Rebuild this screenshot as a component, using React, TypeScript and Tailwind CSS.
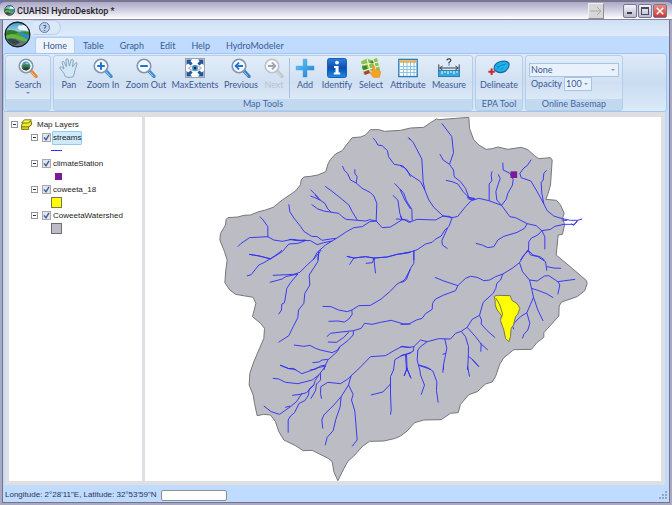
import type { ReactNode } from "react";

function Globe({ className }: { className: string }) {
  return (
    <svg viewBox="0 0 28 28" className={className} aria-hidden="true">
      <defs>
        <clipPath id="globe-disc">
          <circle cx="14" cy="14" r="12" />
        </clipPath>
        <linearGradient id="globe-sky" x1="0" y1="0" x2="0" y2="1">
          <stop offset="0" stopColor="#3c93c4" />
          <stop offset="1" stopColor="#a9dcf0" />
        </linearGradient>
      </defs>
      <circle cx="14" cy="14" r="13" fill="#22282c" stroke="#11161a" />
      <g clipPath="url(#globe-disc)">
        <rect width="28" height="13" fill="url(#globe-sky)" />
        <path d="M14 7 Q15 3 18 5 Q22 2 26 7 L26 10 L16 9Z" fill="#eef6fa" />
        <path d="M0 12 Q8 7 14 11 L28 12 L28 17 L0 18Z" fill="#4f9d3a" />
        <path d="M2 10 Q8 8 15 12 L8 15 L0 14Z" fill="#2f7a2c" />
        <path d="M0 17 Q7 11 14 15 Q21 18 28 15 L28 22 L0 22Z" fill="#63b83e" />
        <path d="M15 12 Q22 11 28 14 L28 20 Q20 19 15 12Z" fill="#2b8fc0" />
        <path d="M17 11 Q23 10 28 12 L28 15 Q22 14 17 11Z" fill="#3f8a3c" />
        <path d="M0 19 Q9 16 17 20 Q22 22 28 20 L28 28 L0 28Z" fill="#66787e" />
        <path d="M3 19 Q10 17 17 22 L12 25 Q6 24 3 19Z" fill="#33484a" />
      </g>
    </svg>
  );
}

function Magnifier({ tone, handle, children }: { tone: string; handle: string; children?: ReactNode }) {
  return (
    <svg viewBox="0 0 20 20" className="size-5" aria-hidden="true">
      <path d="M13 13 L18 18.4" stroke={handle} strokeWidth="3.4" strokeLinecap="round" />
      <path d="M12.6 13.4 L17 18.2" stroke="#ffffff" strokeOpacity=".5" strokeWidth="1" />
      <circle cx="8" cy="8" r="6.7" fill="#f2f8fe" stroke={tone} strokeWidth="1.8" />
      <circle cx="8" cy="8" r="5.3" fill="none" stroke="#ffffff" strokeWidth=".8" />
      {children}
    </svg>
  );
}

const SearchIcon = () => (
  <Magnifier tone="#8b97a6" handle="#ee8330">
    <circle cx="8" cy="8" r="4.4" fill="#3f93bd" />
    <path d="M3.6 8 Q7 5.6 12.4 8 Q12 12 8 12.4 Q4 12 3.6 8Z" fill="#3d7a32" />
    <path d="M4.2 10.4 Q8 8 11.6 10.6 Q8 14 4.2 10.4Z" fill="#303c3e" />
    <path d="M7 5.6 Q9 3.8 11 5.6Z" fill="#fff" />
  </Magnifier>
);
const ZoomInIcon = () => (
  <Magnifier tone="#8395b4" handle="#3d8fd4">
    <path d="M8 4.2V11.8M4.2 8H11.8" stroke="#1f74cf" strokeWidth="2" />
  </Magnifier>
);
const ZoomOutIcon = () => (
  <Magnifier tone="#8395b4" handle="#3d8fd4">
    <path d="M4.2 8H11.8" stroke="#1f74cf" strokeWidth="2" />
  </Magnifier>
);
const PreviousIcon = () => (
  <Magnifier tone="#8395b4" handle="#3d7fc4">
    <path d="M12 8H5M8 4.6L4.6 8L8 11.4" stroke="#1f74cf" strokeWidth="1.8" fill="none" />
  </Magnifier>
);
const NextIcon = () => (
  <Magnifier tone="#bfc2c7" handle="#c3c5c9">
    <path d="M4 8H11M8 4.6L11.4 8L8 11.4" stroke="#a2a5aa" strokeWidth="1.8" fill="none" />
  </Magnifier>
);
const PanIcon = () => (
  <svg viewBox="0 0 20 20" className="size-5" aria-hidden="true">
    <path
      d="M6.4 18.8 Q5.4 15.6 3.4 13.4 L.9 10.2 Q.6 8.6 2.2 8.9 L5 11 L3 4.4 Q3.3 2.7 4.8 3.6 L7.4 8.6 L7 1.6 Q8 0 9.2 1.5 L10.3 8 L12.2 1.7 Q13.6 .5 14.2 2.2 L13.5 9 L16.6 4.8 Q18.2 4.3 18 6 L15.9 12.5 Q15.6 16 13.8 19 Q10 20 6.4 18.8Z"
      fill="#d3e6f5"
      stroke="#7f9fbf"
      strokeWidth=".9"
      strokeLinejoin="round"
    />
  </svg>
);
const ExtentsIcon = () => (
  <svg viewBox="0 0 20 20" className="size-5" aria-hidden="true">
    <rect x=".5" y=".5" width="19" height="19" fill="#fbfdff" stroke="#9aa0a8" />
    <path d="M1.5 1.5H7L5.4 3.2L7.6 5.6L5.6 7.6L3.2 5.4L1.5 7ZM18.5 1.5H13L14.6 3.2L12.4 5.6L14.4 7.6L16.8 5.4L18.5 7ZM1.5 18.5H7L5.4 16.8L7.6 14.4L5.6 12.4L3.2 14.6L1.5 13ZM18.5 18.5H13L14.6 16.8L12.4 14.4L14.4 12.4L16.8 14.6L18.5 13Z" fill="#24549a" />
    <path d="M3.4 10.2 Q10 4.6 16.6 10.2 Q10 15.4 3.4 10.2Z" fill="#e8f3fa" stroke="#8aa4b8" strokeWidth=".8" />
    <circle cx="10" cy="10" r="2.9" fill="#3c92c8" />
    <circle cx="10" cy="10" r="1.2" fill="#123" />
  </svg>
);
const AddIcon = () => (
  <svg viewBox="0 0 20 20" className="size-5" aria-hidden="true">
    <defs>
      <linearGradient id="add-fill" x1="0" y1="0" x2="1" y2="1">
        <stop offset="0" stopColor="#6cc8f6" />
        <stop offset="1" stopColor="#1b7ed0" />
      </linearGradient>
    </defs>
    <path d="M7.8 .8H12.2V7.8H19.2V12.2H12.2V19.2H7.8V12.2H.8V7.8H7.8Z" fill="url(#add-fill)" />
  </svg>
);
const IdentifyIcon = () => (
  <svg viewBox="0 0 20 20" className="size-5" aria-hidden="true">
    <defs>
      <linearGradient id="info-fill" x1="0" y1="0" x2="0" y2="1">
        <stop offset="0" stopColor="#2f7fe0" />
        <stop offset=".5" stopColor="#0b4dae" />
        <stop offset="1" stopColor="#1f8de8" />
      </linearGradient>
    </defs>
    <rect x=".5" y=".5" width="19" height="19" rx="2" fill="url(#info-fill)" stroke="#1b5fb4" />
    <circle cx="10" cy="4.6" r="1.9" fill="#fff" />
    <path d="M7 8H11.6V14.6H13.2V16.6H6.8V14.6H8.5V10H7Z" fill="#fff" />
  </svg>
);
const SelectIcon = () => (
  <svg viewBox="0 0 20 20" className="size-5" aria-hidden="true">
    <path d="M0 3.4L6 .6L10 2L16 0L19 12L13 14L9 13L3 17Z" fill="#8cc34c" />
    <path d="M6 .6L9 13M0 7L18 4M2 13L18 8M12 1L15 13" stroke="#f2f6df" strokeWidth="1.1" />
    <path d="M1 8.4L5.6 7.6L6.6 11L2 12ZM9 3.4L12 3L13 5L9.6 5.4Z" fill="#3f8535" />
    <path d="M3 14L8 12L9 15L4 17Z" fill="#b03e36" />
    <path d="M11.4 7.6Q12.8 6.6 13.4 8L14 11.4L18.8 12.6Q20 13 19.6 15L18.4 19.4H12.4L9 15.6Q9 13.8 11 14.4L12 15Z" fill="#f7a128" stroke="#e58b17" strokeWidth=".5" />
  </svg>
);
const AttributeIcon = () => (
  <svg viewBox="0 0 20 20" className="size-5" aria-hidden="true">
    <rect x=".8" y="1.4" width="18.4" height="17.2" fill="#f6fbff" stroke="#2f7fb5" strokeWidth="1.4" />
    <rect x="1.8" y="2.2" width="16.4" height="2.6" fill="#f2b040" />
    <path d="M5.5 2.6V18M9 2.6V18M12.5 2.6V18M16 2.6V18M2 8.5H18M2 11.5H18M2 14.5H18" stroke="#86c0e0" strokeWidth=".9" />
  </svg>
);
const MeasureIcon = () => (
  <svg viewBox="0 0 22 20" className="h-5 w-[22px]" aria-hidden="true">
    <path d="M8.8 2.4Q9 .8 11 .8Q13 1 12.8 2.6Q12.4 3.6 11 4.4V5.4M11 6.4V7.6" stroke="#222c38" strokeWidth="1.1" fill="none" />
    <path d="M.8 6.4V13M21.2 6.4V13M2 10H20M4.6 8L1.6 10L4.6 12M17.4 8L20.4 10L17.4 12" stroke="#33414f" strokeWidth="1" fill="none" />
    <rect x=".6" y="12.6" width="20.8" height="6" fill="#37a9dd" stroke="#1c74b2" strokeWidth=".9" />
    <path d="M4 13V16M7 13V14.8M10 13V16M13 13V14.8M16 13V16M19 13V14.8" stroke="#fff" strokeWidth="1" />
  </svg>
);
const DelineateIcon = () => (
  <svg viewBox="0 0 22 20" className="h-5 w-[22px]" aria-hidden="true">
    <path d="M6.2 11.4Q5.6 6.2 11 4Q19 1.8 21 5.6Q21.6 10 17 13.4Q10 16.4 6.2 11.4Z" fill="#1db4ea" stroke="#23659f" strokeWidth="1.2" />
    <path d="M9 11.6L12 7.6L18 6M12.6 12L15 9.4M8.6 8.2L11 8.8" stroke="#1184c8" strokeWidth="1" fill="none" />
    <path d="M3.6 10.6V17M.4 13.8H6.8" stroke="#c9252b" strokeWidth="2" />
  </svg>
);

type Tool = { label: string; icon: ReactNode; width: string; disabled?: boolean };

const navigationTools: Tool[] = [
  { label: "Pan", icon: <PanIcon />, width: "w-6" },
  { label: "Zoom In", icon: <ZoomInIcon />, width: "w-11" },
  { label: "Zoom Out", icon: <ZoomOutIcon />, width: "w-[42px]" },
  { label: "MaxExtents", icon: <ExtentsIcon />, width: "w-14" },
  { label: "Previous", icon: <PreviousIcon />, width: "w-9" },
  { label: "Next", icon: <NextIcon />, width: "w-[30px]", disabled: true },
];
const layerTools: Tool[] = [
  { label: "Add", icon: <AddIcon />, width: "w-7" },
  { label: "Identify", icon: <IdentifyIcon />, width: "w-9" },
  { label: "Select", icon: <SelectIcon />, width: "w-8" },
  { label: "Attribute", icon: <AttributeIcon />, width: "w-[42px]" },
  { label: "Measure", icon: <MeasureIcon />, width: "w-10" },
];

function ToolButton({ label, icon, width, disabled }: Tool) {
  return (
    <button
      type="button"
      disabled={disabled}
      className={`flex ${width} flex-col items-center whitespace-nowrap text-[9px] leading-3 text-[#3b5a92] disabled:text-[#b9c2cd]`}
    >
      {icon}
      <span className="mt-px">{label}</span>
    </button>
  );
}

function RibbonGroup({ title, children }: { title: string; children: ReactNode }) {
  return (
    <section className="flex h-14 shrink-0 flex-col overflow-hidden rounded-[3px] border border-[#b3cdea] bg-linear-to-b from-[#e2edf9] via-[#d0e0f2] to-[#e3eefa]">
      <div className="flex h-11 px-[3px] pt-[2px]">{children}</div>
      <h2 className="h-[11px] bg-[#c2d9f0] text-center text-[9px] leading-[10px] whitespace-nowrap text-[#4566a3]">{title}</h2>
    </section>
  );
}

function Dropdown({ label, value, className }: { label: string; value: string; className: string }) {
  return (
    <span className={`relative block border border-[#a9c3e2] bg-[#e9f2fc] ${className}`}>
      <select aria-label={label} className="block h-full w-full appearance-none bg-transparent px-px text-[9px] leading-3 text-[#3b5a92]">
        <option>{value}</option>
      </select>
      <span className="pointer-events-none absolute top-1/2 right-[3px] -mt-px border-x-2 border-t-2 border-x-transparent border-t-[#7b98c4]" />
    </span>
  );
}

function TitleBar() {
  const frame = "flex size-[14px] items-center justify-center rounded-[2px] border border-[#77778f]";
  return (
    <header className="flex h-5 shrink-0 items-center rounded-t-[5px] border-t-2 border-b border-t-[#77758f] border-b-[#8886a0] bg-linear-to-b from-[#aaa8c6] via-[#d2d1e0] to-white pr-[5px] pl-1">
      <Globe className="size-[11px]" />
      <h1 className="ml-[2px] flex-1 font-['Roboto','Noto_Sans',sans-serif] text-[9px] leading-4 font-medium text-[#1d1d28]">CUAHSI HydroDesktop *</h1>
      <button type="button" aria-label="Forward" className="mr-[19px] flex size-4 items-center justify-center border border-r-[#8e8e8e] border-b-[#8e8e8e] border-t-[#eee] border-l-[#eee] bg-[#d8d7d7]">
        <svg viewBox="0 0 12 10" className="h-[10px] w-3" fill="none" stroke="#aaaaaa">
          <path d="M0 5H11M7 1L11 5L7 9" />
        </svg>
      </button>
      <div className="flex gap-px">
        <button type="button" aria-label="Minimize" className={`${frame} bg-linear-to-b from-[#f4f4fa] to-[#b9b9cf]`}>
          <span className="mt-[5px] mr-px h-[2px] w-[5px] bg-[#3c3c4e]" />
        </button>
        <button type="button" aria-label="Maximize" className={`${frame} bg-linear-to-b from-[#f4f4fa] to-[#b9b9cf]`}>
          <span className="size-2 border border-t-2 border-[#4a4a60]" />
        </button>
        <button type="button" aria-label="Close" className={`${frame} bg-linear-to-b from-[#ee8a7c] to-[#c8393a]`}>
          <svg viewBox="0 0 8 8" className="size-2" stroke="#fff" strokeWidth="1.5">
            <path d="M.7 .7L7.3 7.3M7.3 .7L.7 7.3" />
          </svg>
        </button>
      </div>
    </header>
  );
}

function Ribbon() {
  return (
    <div className="relative shrink-0">
      <button type="button" aria-label="Application menu" className="absolute top-px left-px">
        <Globe className="size-[27px]" />
      </button>
      <div className="h-4 bg-linear-to-b from-[#cfe0f5] to-[#e0ebfa] pl-[30px]">
        <div className="flex h-[15px] w-7 items-center rounded-r-full border border-l-0 border-[#bdd0ea] bg-[#dbe8f8] pl-[6px]">
          <button type="button" aria-label="Help" className="flex size-[11px] items-center justify-center rounded-full border border-[#5a7bb0] bg-[#c3d3ea] text-[8px] leading-none font-bold text-[#2d4f86]">
            ?
          </button>
        </div>
      </div>
      <nav className="flex h-[17px] items-end bg-[#bfdbff] pl-8 text-[9px] leading-4 text-[#3b5a92]">
        {["Home", "Table", "Graph", "Edit", "Help", "HydroModeler"].map((tab, i) => (
          <button
            key={tab}
            type="button"
            className={`h-4 border border-b-0 px-[7px] ${i === 0 ? "rounded-t-[3px] border-[#b5cdea] bg-[#edf4fd]" : "border-transparent"}`}
          >
            {tab}
          </button>
        ))}
      </nav>
      <div className="mr-[2px] flex h-[59px] gap-[2px] rounded-[3px] border border-[#a3c4ec] bg-linear-to-b from-[#dfeafa] via-[#c9dcf0] to-[#dceafa] px-px pt-px">
        <RibbonGroup title="">
          <button type="button" className="flex w-[38px] flex-col items-center text-[9px] leading-3 text-[#3b5a92]">
            <SearchIcon />
            <span className="mt-px">Search</span>
            <span className="mt-px border-x-2 border-t-2 border-x-transparent border-t-[#6d8cba]" />
          </button>
        </RibbonGroup>
        <RibbonGroup title="Map Tools">
          {navigationTools.map((tool) => (
            <ToolButton key={tool.label} {...tool} />
          ))}
          <span className="mr-px h-10 w-px bg-[#a6c0e0]" />
          {layerTools.map((tool) => (
            <ToolButton key={tool.label} {...tool} />
          ))}
        </RibbonGroup>
        <RibbonGroup title="EPA Tool">
          <ToolButton label="Delineate" icon={<DelineateIcon />} width="w-10" />
        </RibbonGroup>
        <RibbonGroup title="Online Basemap">
          <div className="flex flex-col pt-[5px]">
            <Dropdown label="Basemap" value="None" className="h-[14px] w-[90px]" />
            <div className="flex items-center gap-[2px] pl-[2px] text-[9px] leading-3 text-[#3b5a92]">
              <span>Opacity</span>
              <Dropdown label="Opacity" value="100" className="h-[14px] w-7" />
            </div>
          </div>
        </RibbonGroup>
      </div>
    </div>
  );
}

const Expander = () => (
  <button type="button" aria-label="Collapse" className="flex size-[7px] shrink-0 items-center justify-center border border-[#8f959e] bg-white">
    <span className="h-px w-[3px] bg-[#333]" />
  </button>
);

const layers: { name: string; selected?: boolean; symbol: ReactNode }[] = [
  { name: "streams", selected: true, symbol: <span className="h-px w-[11px] bg-[#3434ff]" /> },
  { name: "climateStation", symbol: <span className="ml-[4px] size-[7px] bg-[#7c1a98]" /> },
  { name: "coweeta_18", symbol: <span className="size-[11px] border border-[#77775a] bg-[#ffff00]" /> },
  { name: "CoweetaWatershed", symbol: <span className="size-[11px] border border-[#6d6d74] bg-[#bcbcc5]" /> },
];

function LayerTree() {
  return (
    <aside className="w-[133px] shrink-0 bg-white pt-px pl-[2px] font-['Liberation_Sans',Arial,sans-serif] text-[8px] leading-[13px] text-[#1c1c1c]">
      <div className="flex h-[13px] items-center">
        <Expander />
        <svg viewBox="0 0 11 11" className="ml-[3px] size-[11px]" stroke="#5a5700" strokeWidth=".8" aria-hidden="true">
          <path d="M.6 8L3.4 4.6H10.4L7.6 8V10.4H.6Z" fill="#e4dc1e" />
          <path d="M.6 5.8L3.4 2.6H10.4V6L7.6 7.8H.6Z" fill="#f2ec2c" />
          <path d="M.6 4L3.4 .8H10.4L7.6 4Z" fill="#fffa50" />
        </svg>
        <span className="ml-[5px]">Map Layers</span>
      </div>
      <ul>
        {layers.map((layer) => (
          <li key={layer.name}>
            <div className="flex h-[13px] items-center pl-5">
              <Expander />
              <label className="ml-1 flex items-center">
                <span className="relative mr-px flex size-[9px]">
                  <input type="checkbox" defaultChecked className="peer size-[9px] appearance-none border border-[#a5a8ae] bg-[#e3e6ea]" />
                  <svg viewBox="0 0 9 9" className="pointer-events-none absolute inset-0 hidden peer-checked:block" fill="none" stroke="#3d5c9c" strokeWidth="1.4">
                    <path d="M2 4.4L4 6.8L7 1.8" />
                  </svg>
                </span>
                <span className={`h-[14px] border leading-3 ${layer.selected ? "rounded-[1px] border-[#8fcdf0] bg-[#cfeafc]" : "border-transparent"}`}>
                  {layer.name}
                </span>
              </label>
            </div>
            <div className="flex h-[13px] items-center pl-10">{layer.symbol}</div>
          </li>
        ))}
      </ul>
    </aside>
  );
}

const watershed =
  "52,323 82,321 100,316 120,315 145,305 165,300 188,292 215,270 255,243 270,224 272,210 280,201 300,199 322,195 346,185 352,163 360,148 375,132 395,122 410,102 425,83 450,81 465,75 480,59 505,59 522,64 570,61 600,54 640,52 660,38 678,27 685,29 775,22 777,55 789,88 805,105 827,118 845,116 862,111 892,118 932,112 952,119 972,137 985,146 1020,143 1025,150 1020,225 1013,250 1006,268 1038,271 1050,285 1061,310 1057,322 1062,345 1056,373 1043,375 1037,435 1085,475 1127,511 1130,520 1123,542 1100,560 1053,576 1046,588 1045,618 1000,668 1000,682 980,697 963,718 910,719 880,743 868,762 855,800 845,816 825,822 800,845 775,854 750,883 743,908 720,910 692,929 640,930 612,938 590,963 570,978 555,985 520,993 477,994 455,1010 430,1038 412,1054 398,1080 382,1112 370,1085 365,1055 355,1046 305,1021 278,1022 255,1007 220,990 205,965 195,935 180,915 160,913 140,917 132,880 128,855 116,825 118,790 130,755 145,720 160,685 162,655 150,640 126,620 136,580 128,562 75,553 58,540 43,518 46,480 50,450 42,425 28,390 30,370 45,345 47,328";

const streamSheets: { origin: string; d: string }[] = [
  {
    origin: "translate(0 0)",
    d: `M487 84L495 92L502 105L515 107L531 122L534 140L551 163L575 167L589 179L600 200
    M396 168L402 182L411 190L420 210L437 219L440 200L433 190L433 178M437 219L455 235L480 248L490 258L499 280L497 333L515 353L540 351L575 329L590 330L600 337
    M552 220L568 237L583 270L600 297M547 256L562 270L568 310L575 329M594 83L600 90
    M344 229L362 242L385 260L415 285L425 305L441 331L407 328L395 320L385 310L358 306L340 303L322 297L303 283M441 331L465 333L478 329L497 333
    M300 239L316 255L330 271L343 280L352 297L362 306M300 258L313 263L330 271M314 255L324 266
    M235 283L238 305L250 324L270 349L280 364L303 379L320 380L335 391L360 387L378 385
    M148 320L158 330L172 350L172 382M82 410L92 400L117 383L172 380L190 390L215 394L245 388L270 391L300 392L320 404L340 398L365 393
    M497 333L478 335L455 350L430 353L408 365L378 385L345 405L320 427L308 450M325 425L322 450
    M235 388L260 392L285 390M285 392L262 400L235 402L215 425L180 447L148 438L116 433
    M409 439L430 444L465 440L490 444L530 441L560 433L600 427M490 444L492 450`,
  },
  {
    origin: "translate(570 0)",
    d: `M24 83L38 97L64 147L68 215L73 240L85 270L100 292L128 318L155 323L172 319L195 290L212 272L235 265L265 272L303 286L328 320L345 323L380 341L407 347L424 362L450 358L463 349L491 343L522 343L531 334
    M124 40L154 80L159 128L147 163L159 180L161 200L180 215L195 235L205 262L225 268M118 132L128 150L147 163M136 211L155 215L172 222L188 245L212 270M200 262L222 265L218 270L202 266
    M0 168L12 173L30 195L60 215L73 240M0 238L10 250L18 273L34 298L35 332M-14 327L10 328L25 337L50 328L105 330L128 318L145 319L155 323M0 318L5 330
    M275 184L272 195L274 212L266 222L266 272M293 193L299 205L286 245L289 270L303 286
    M307 158L308 180L328 190L338 208L336 225L322 250L317 268L303 286
    M392 149L380 167L370 174L358 190L362 203L391 213L410 245L430 282L440 302L460 318L482 325L510 331L531 331L545 327M531 331L519 346L512 341M484 330L500 332
    M438 181L430 190L428 210L422 218L424 250L430 282
    M155 323L145 350L133 360L122 378L104 388L95 397L75 402L52 418L40 423L0 432M40 423L40 450
    M141 354L124 392L126 405L141 416
    M380 341L372 355L350 367L310 379L292 390L280 410L262 413L245 405L226 400
    M424 362L412 375L393 384L385 395L384 422L370 435L360 450M424 362L433 380L433 418M384 422L398 435L418 440L432 450`,
  },
  {
    origin: "translate(0 420)",
    d: `M116 13L140 17L180 26L205 9L214 0M180 26L160 38L145 45L122 74L109 78
    M332 0L315 22L290 45L268 67L250 73L187 76M262 72L225 80L215 87L178 97M262 72L240 98L229 115L222 158L214 162L213 180L204 193
    M325 5L322 35L296 75L298 105L283 130L280 160L264 180L262 203L248 230L235 257L204 277
    M409 19L430 24L465 20L490 24L530 21L560 13L600 7M430 24L417 44M490 24L486 38L466 40M490 24L495 70
    M600 57L582 90L560 102L540 123L512 147L480 166L445 167L424 180L410 185L384 180L362 170L336 169M424 180L425 193L415 207L402 216L382 213L354 214
    M600 222L580 222L542 211L510 217L485 223L462 220L452 235L429 242L392 246L360 250L349 260M415 246L400 262L378 277L352 276
    M429 242L428 255L412 272L388 290L380 305L352 330L345 345L340 360M388 290L382 300L365 308L330 300L315 295L298 286L280 289L250 285
    M306 338L325 336L335 330L352 328M298 360L315 358L330 348L345 345M209 346L235 356L257 359
    M441 360L480 320L525 317L550 302L575 289L600 293M600 310L578 314L553 329L549 360M588 315L590 360`,
  },
  {
    origin: "translate(570 420)",
    d: `M40 0L40 40L30 55L18 88L10 95L0 97M103 82L130 93L172 107L195 85L210 79L230 82L250 92L268 90L285 80L307 72M172 107L165 122L130 135L105 147L96 160L95 178L75 191L65 205L48 210L25 222L0 223
    M382 0L368 20L357 38L335 55L307 72L300 90L289 100L286 115L278 130L248 157L237 196L215 208L200 232L182 244L165 250L150 267L115 266L80 275L60 270L40 290L25 292L0 290
    M382 0L390 15L412 20L435 35L439 62M439 50L460 54L482 55
    M357 38L366 65L387 90L393 115L399 142L390 163L379 188L388 220L382 240L370 253L366 265
    M387 90L410 93L432 78L445 77L472 95L524 88M472 95L478 105L472 133M393 115L415 122L440 132L458 143M399 142L412 180L428 213M379 188L360 200L343 217L336 228L340 238
    M237 196L243 210L242 222L260 242L284 263M200 232L225 260L242 282L262 300M242 280L241 305
    M182 244L195 260L204 290L203 330L201 360M203 318L220 332L235 350
    M133 267L139 295L136 310L126 313M136 310L129 345L129 360
    M80 275L60 290L52 300L50 330L58 360M55 346L90 358M40 290L38 304L15 314L0 318M15 314L18 360`,
  },
  {
    origin: "translate(0 750)",
    d: `M345 18L318 24L300 32L274 41L248 25L235 26L209 15
    M345 18L325 45L305 60L262 71L225 67L205 57L187 55M325 45L314 62L310 75L288 98L270 103L245 106M330 40L330 60L318 72L315 92L301 116
    M310 75L296 87L294 105L283 122L266 130L252 158L240 168L233 180L233 218M275 99L258 125L240 140L207 163L182 155L160 138M240 138L224 142
    M441 30L422 47L412 57L390 71L352 67L331 80L330 100L333 116M422 47L414 75L392 110L370 135L340 165L334 180L337 206
    M392 110L389 140L376 178L368 212L350 232L344 256M414 75L428 103L423 120L433 153L440 240L425 259
    M549 30L540 50L540 102L542 150L540 164M540 72L517 96L481 105M590 30L589 25L581 48M589 25L600 52`,
  },
  {
    origin: "translate(570 750)",
    d: `M18 30L11 48M18 22L32 56M58 30L60 45L72 75L62 104M55 15L80 22L97 33L109 65L108 92L113 128
    M129 15L127 38M201 18L207 50M216 0L235 20`,
  },
];

function MapView() {
  return (
    <main className="min-w-0 flex-1 bg-white">
      <svg viewBox="-195 21 1545 1092" className="block size-full" role="img" aria-label="Coweeta watershed map">
        <polygon points={watershed} fill="#bcbcc5" stroke="#77777b" strokeWidth="3" />
        <g fill="none" stroke="#3030f2" strokeWidth="2.8" strokeLinejoin="round">
          {streamSheets.map((sheet) => (
            <path key={sheet.origin} transform={sheet.origin} d={sheet.d} />
          ))}
        </g>
        <path
          transform="translate(570 420)"
          d="M281 139L290 136L329 137L335 152L350 161L358 175L352 192L345 200L339 225L332 235L330 260L325 275L315 265L310 240L300 212L303 197L290 180L284 165L284 152Z"
          fill="#ffff00"
          stroke="#77775a"
          strokeWidth="3"
        />
        <path transform="translate(570 420)" d="M286 144L298 165L306 192L303 203" fill="none" stroke="#77775a" strokeWidth="3" />
        <rect x="900" y="184" width="20" height="20" fill="#7c1a98" />
      </svg>
    </main>
  );
}

export default function App() {
  return (
    <div className="flex h-screen flex-col overflow-hidden bg-[#6874c4] font-['Lato','Noto_Sans',sans-serif]">
      <TitleBar />
      <div className="flex min-h-0 flex-1 flex-col border-x-2 border-b-2 border-[#aaa8c2] bg-[#bfdbff]">
        <div className="flex min-h-0 flex-1 flex-col border-x border-b border-[#74748e]">
          <Ribbon />
          <div className="mr-1 ml-[2px] flex min-h-0 flex-1 gap-[3px] border-4 border-t-[5px] border-[#dfdfe3] bg-[#dfdfe3]">
            <LayerTree />
            <MapView />
          </div>
          <footer className="flex h-[17px] shrink-0 items-center gap-1 pt-[3px] pl-[2px] font-['Liberation_Sans',Arial,sans-serif] text-[8px] leading-3 text-[#2c3550]">
            <label htmlFor="status-progress">Longitude: 2°28'11"E, Latitude: 32°53'59"N</label>
            <input id="status-progress" readOnly className="h-[11px] w-[66px] rounded-[2px] border border-[#8b8f96] bg-white" />
            <svg viewBox="0 0 8 8" className="ml-auto mr-[2px] size-2" fill="#98a6bb" aria-hidden="true">
              <path d="M6 0h2v2H6zM3 3h2v2H3zM6 3h2v2H6zM0 6h2v2H0zM3 6h2v2H3zM6 6h2v2H6z" />
            </svg>
          </footer>
        </div>
      </div>
    </div>
  );
}
